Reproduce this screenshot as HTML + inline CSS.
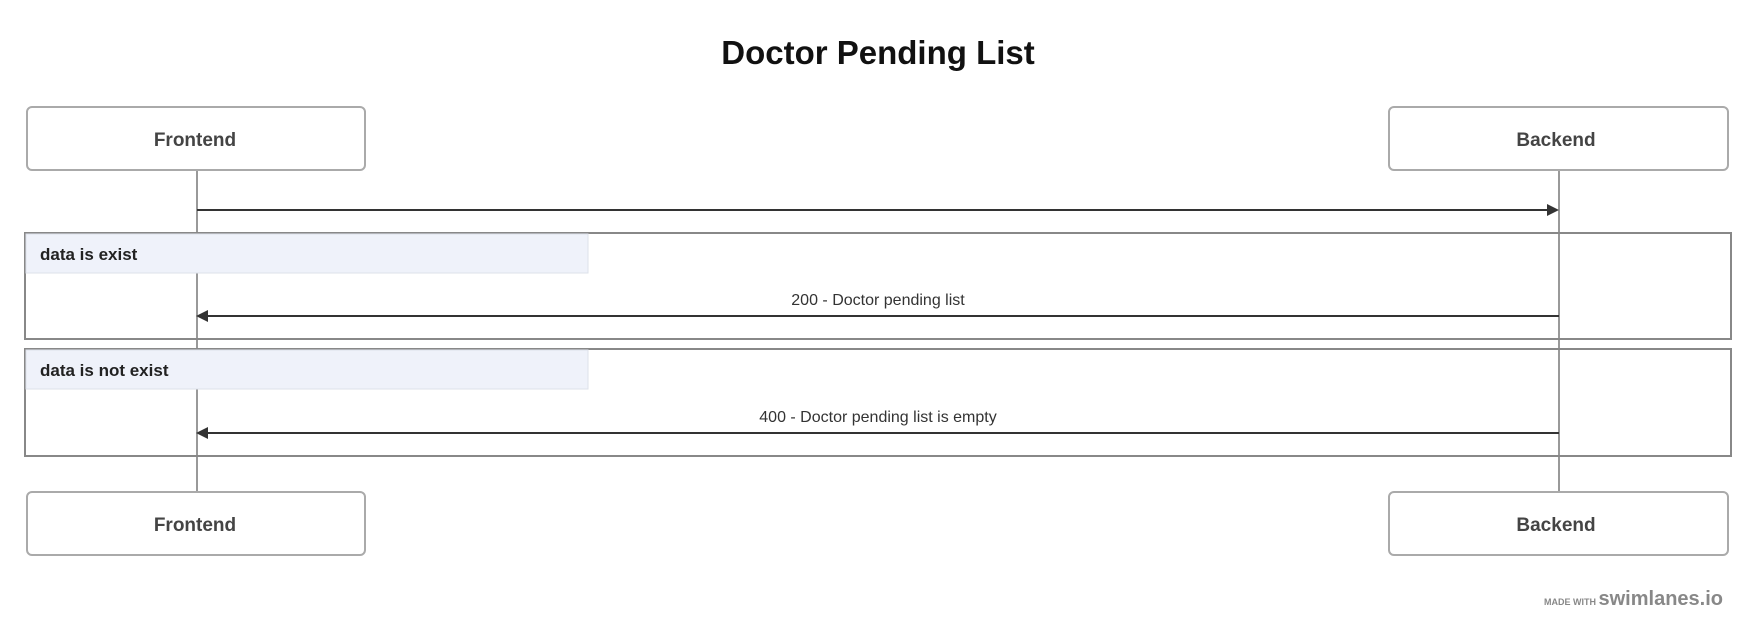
<!DOCTYPE html>
<html><head><style>
body{margin:0;width:1757px;height:637px;background:#fff;overflow:hidden;font-family:"Liberation Sans",sans-serif}
</style></head><body>
<svg width="1757" height="637" xmlns="http://www.w3.org/2000/svg" font-family="Liberation Sans, sans-serif">
<text x="878" y="64" text-anchor="middle" font-size="33" font-weight="bold" fill="#111">Doctor Pending List</text>
<line x1="197" y1="170" x2="197" y2="492" stroke="#999" stroke-width="2"/>
<line x1="1559" y1="170" x2="1559" y2="492" stroke="#999" stroke-width="2"/>
<rect x="27" y="107" width="338" height="63" rx="5" fill="#fff" stroke="#aaa" stroke-width="2"/>
<rect x="1389" y="107" width="339" height="63" rx="5" fill="#fff" stroke="#aaa" stroke-width="2"/>
<rect x="27" y="492" width="338" height="63" rx="5" fill="#fff" stroke="#aaa" stroke-width="2"/>
<rect x="1389" y="492" width="339" height="63" rx="5" fill="#fff" stroke="#aaa" stroke-width="2"/>
<g font-size="19" font-weight="bold" fill="#444" text-anchor="middle">
<text x="195" y="146">Frontend</text><text x="1556" y="146">Backend</text>
<text x="195" y="531">Frontend</text><text x="1556" y="531">Backend</text>
</g>
<line x1="197" y1="210" x2="1548" y2="210" stroke="#333" stroke-width="2"/>
<path d="M1559 210 L1547 204 L1547 216 Z" fill="#333"/>
<rect x="25" y="233" width="1706" height="106" fill="none" stroke="#888" stroke-width="2"/>
<rect x="26" y="234" width="562" height="39" fill="#eff2fa" stroke="#dde1ea" stroke-width="1"/>
<text x="40" y="260" font-size="17" font-weight="bold" fill="#222">data is exist</text>
<text x="878" y="305" text-anchor="middle" font-size="16" fill="#333">200 - Doctor pending list</text>
<line x1="207" y1="316" x2="1559" y2="316" stroke="#333" stroke-width="2"/>
<path d="M196 316 L208 310 L208 322 Z" fill="#333"/>
<rect x="25" y="349" width="1706" height="107" fill="none" stroke="#888" stroke-width="2"/>
<rect x="26" y="350" width="562" height="39" fill="#eff2fa" stroke="#dde1ea" stroke-width="1"/>
<text x="40" y="376" font-size="17" font-weight="bold" fill="#222">data is not exist</text>
<text x="878" y="422" text-anchor="middle" font-size="16" fill="#333">400 - Doctor pending list is empty</text>
<line x1="207" y1="433" x2="1559" y2="433" stroke="#333" stroke-width="2"/>
<path d="M196 433 L208 427 L208 439 Z" fill="#333"/>
<text x="1596" y="605" text-anchor="end" font-size="9" font-weight="bold" fill="#888">MADE WITH</text>
<text x="1723" y="605" text-anchor="end" font-size="20" font-weight="bold" fill="#888">swimlanes.io</text>
</svg>
</body></html>
